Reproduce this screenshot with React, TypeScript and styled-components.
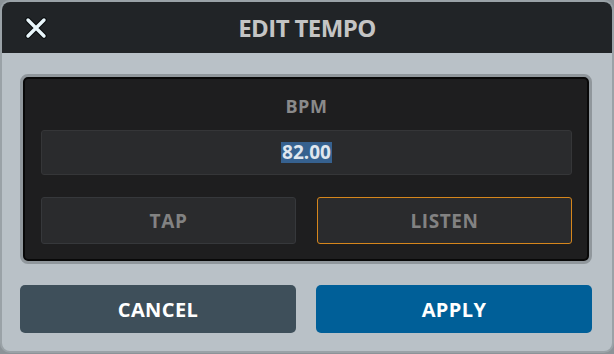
import React, { FC } from 'react';
import styled, { createGlobalStyle } from 'styled-components';

const GlobalStyle = createGlobalStyle`
  html, body {
    margin: 0;
    padding: 0;
    background: #8c9398;
  }

  body {
    font-family: "Open Sans", "Liberation Sans", Arial, sans-serif;
  }
`;

const Dialog = styled.div`
  box-sizing: border-box;
  width: 614px;
  height: 353px;
  border: 2px solid #9aa2a7;
  border-radius: 10px;
  overflow: hidden;
  background: #b9c1c7;
  display: flex;
  flex-direction: column;
`;

const Header = styled.div`
  height: 51px;
  flex: none;
  background: #212427;
  display: grid;
  grid-template-columns: 70px 1fr 70px;
  align-items: center;
`;

const CloseButton = styled.button`
  justify-self: start;
  margin-left: 22px;
  padding: 0;
  width: 24px;
  height: 24px;
  border: none;
  background: none;
  display: flex;
  align-items: center;
  justify-content: center;
  cursor: pointer;
`;

const Title = styled.div`
  text-align: center;
  color: #c4c4c4;
  font-size: 24px;
  font-weight: 700;
  letter-spacing: -0.6px;
  line-height: 28px;
`;

const Body = styled.div`
  flex: 1;
  padding: 21px 20px 0 18px;
  display: flex;
  flex-direction: column;
  gap: 21px;
`;

const Panel = styled.div`
  box-sizing: border-box;
  border: 3px solid #90979c;
  border-radius: 8px;
  background: #1e1e1f;
  box-shadow: inset 0 0 0 2px #080808;
  padding: 18px 17px 17px 18px;
  display: flex;
  flex-direction: column;
`;

const Label = styled.div`
  height: 22px;
  line-height: 22px;
  text-align: center;
  color: #8a8a8a;
  font-size: 18px;
  font-weight: 700;
  letter-spacing: 0.6px;
`;

const ValueField = styled.div`
  box-sizing: border-box;
  margin-top: 13px;
  height: 45px;
  border: 1px solid #353638;
  border-radius: 3px;
  background: #2a2b2d;
  display: flex;
  align-items: center;
  justify-content: center;
`;

const Selected = styled.span`
  background: #36618f;
  color: #dfe6ee;
  font-size: 19px;
  font-weight: 700;
  line-height: 21px;
  padding: 0 1px;
`;

const ButtonRow = styled.div`
  margin-top: 22px;
  display: grid;
  grid-template-columns: 1fr 1fr;
  gap: 21px;
`;

const PadButton = styled.button<{ $active?: boolean }>`
  box-sizing: border-box;
  height: 47px;
  border: 1px solid ${(p) => (p.$active ? '#d6861c' : '#36383b')};
  border-radius: 3px;
  background: #2a2b2d;
  color: #828282;
  font-family: inherit;
  font-size: 19px;
  font-weight: 700;
  letter-spacing: 0.6px;
  cursor: pointer;
`;

const Footer = styled.div`
  display: grid;
  grid-template-columns: 1fr 1fr;
  gap: 20px;
`;

const ActionButton = styled.button<{ $primary?: boolean }>`
  height: 48px;
  border: none;
  border-radius: 5px;
  background: ${(p) => (p.$primary ? '#005f98' : '#3e4f5a')};
  color: #ffffff;
  font-family: inherit;
  font-size: 20px;
  font-weight: 700;
  letter-spacing: 0.4px;
  cursor: pointer;
`;

const CloseIcon: FC = () => (
  <svg width='22' height='22' viewBox='0 0 22 22'>
    <path d='M3 3 L19 19 M19 3 L3 19' stroke='#0a0d0f' strokeWidth='5.5' strokeLinecap='round' />
    <path d='M3 3 L19 19 M19 3 L3 19' stroke='#e9f6fb' strokeWidth='3.4' strokeLinecap='round' />
  </svg>
);

const App: FC = () => (
  <>
    <GlobalStyle />
    <Dialog>
      <Header>
        <CloseButton aria-label='close'>
          <CloseIcon />
        </CloseButton>
        <Title>EDIT TEMPO</Title>
        <span />
      </Header>
      <Body>
        <Panel>
          <Label>BPM</Label>
          <ValueField>
            <Selected>82.00</Selected>
          </ValueField>
          <ButtonRow>
            <PadButton>TAP</PadButton>
            <PadButton $active>LISTEN</PadButton>
          </ButtonRow>
        </Panel>
        <Footer>
          <ActionButton>CANCEL</ActionButton>
          <ActionButton $primary>APPLY</ActionButton>
        </Footer>
      </Body>
    </Dialog>
  </>
);

export default App;
